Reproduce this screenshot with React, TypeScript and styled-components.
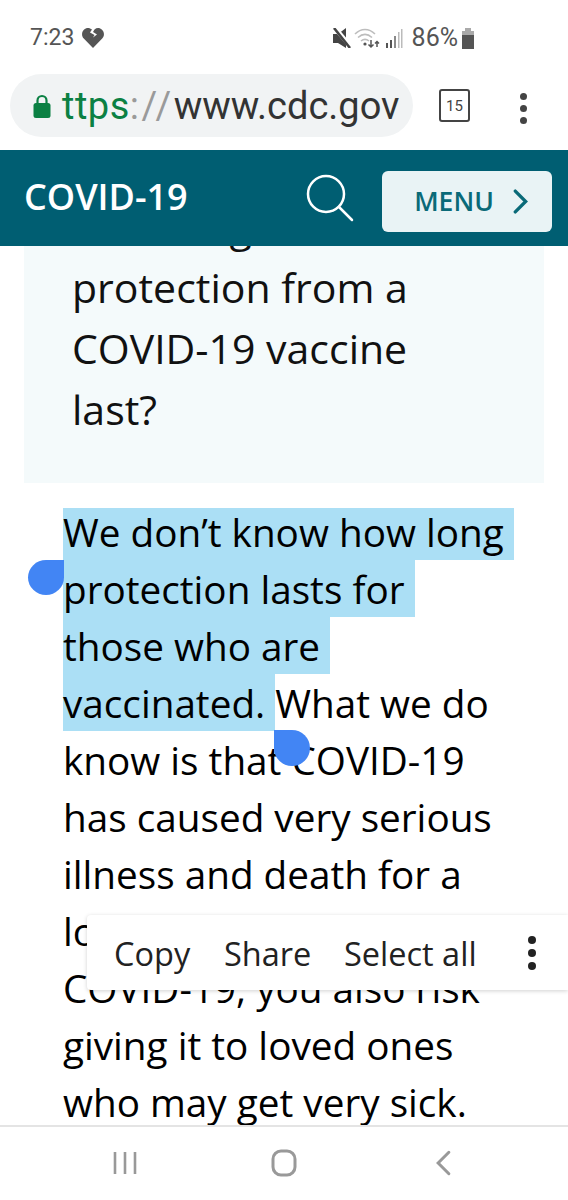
import styled, { createGlobalStyle } from 'styled-components'

const GlobalStyle = createGlobalStyle`
  html, body {
    margin: 0;
    padding: 0;
    background: #fff;
  }
`

const Phone = styled.div`
  width: 568px;
  height: 1200px;
  display: flex;
  flex-direction: column;
  overflow: hidden;
  position: relative;
  background: #fff;
  font-family: 'Open Sans', sans-serif;
`

const StatusBar = styled.div`
  height: 74px;
  flex: none;
  box-sizing: border-box;
  padding: 23px 93px 0 30px;
  display: flex;
  align-items: flex-start;
  justify-content: space-between;
  font-family: Roboto, sans-serif;
  color: #555;
  font-size: 23px;
  line-height: 30px;
`

const StatusGroup = styled.div<{ $gap: number }>`
  display: flex;
  align-items: center;
  gap: ${(p) => p.$gap}px;
`

const BatteryText = styled.span`
  font-size: 25px;
  margin: 0 -3px 0 3px;
`

const UrlRow = styled.div`
  height: 76px;
  flex: none;
  box-sizing: border-box;
  padding: 0 0 13px 10px;
  display: flex;
  align-items: flex-start;
`

const UrlPill = styled.div`
  width: 403px;
  height: 63px;
  border-radius: 32px;
  background: #f1f3f4;
  display: flex;
  align-items: center;
  box-sizing: border-box;
  padding-left: 23px;
  gap: 11px;
  overflow: hidden;
`

const UrlText = styled.div`
  font-family: Roboto, sans-serif;
  font-size: 38px;
  color: #333;
  white-space: nowrap;
  line-height: 63px;
  margin-top: 1px;
`

const Scheme = styled.span`
  color: #0b8043;
  letter-spacing: 0.5px;
`

const Slashes = styled.span`
  color: #9a9a9a;
  letter-spacing: 2.5px;
`

const TabCount = styled.div`
  margin: 15px 0 0 26px;
  width: 27px;
  height: 29px;
  border: 2px solid #444;
  border-radius: 3px;
  display: flex;
  align-items: center;
  justify-content: center;
  font-family: Roboto, sans-serif;
  font-size: 15px;
  color: #444;
`

const Dots = styled.div<{ $size: number; $gap: number; $color: string }>`
  display: flex;
  flex-direction: column;
  gap: ${(p) => p.$gap}px;

  i {
    display: block;
    width: ${(p) => p.$size}px;
    height: ${(p) => p.$size}px;
    border-radius: 50%;
    background: ${(p) => p.$color};
  }
`

const UrlMenu = styled(Dots)`
  margin: 19px 0 0 50px;
`

const SiteHeader = styled.div`
  height: 96px;
  flex: none;
  background: #005e72;
  position: relative;
  z-index: 2;
  display: flex;
  align-items: center;
  box-sizing: border-box;
  padding: 0 16px 0 24px;
`

const SiteTitle = styled.div`
  flex: 1;
  color: #fff;
  font-size: 36px;
  font-weight: 600;
  line-height: 1;
  margin-top: -3px;
`

const SearchIcon = styled.svg`
  margin: 0 28px 0 0;
  display: block;
`

const MenuButton = styled.div`
  width: 170px;
  height: 61px;
  margin-top: 6px;
  border-radius: 6px;
  background: #e9f3f5;
  color: #0a6a78;
  display: flex;
  align-items: center;
  justify-content: center;
  gap: 19px;
  font-size: 26.5px;
  font-weight: 600;
  padding-left: 8px;
  box-sizing: border-box;
`

const Main = styled.div`
  flex: 1;
  min-height: 0;
  overflow: hidden;
  position: relative;
`

const Scrolled = styled.div`
  margin-top: -50px;
`

const Callout = styled.div`
  margin: 0 24px;
  background: #f4fafb;
  padding: 0 48px 43px;
  font-size: 41px;
  line-height: 61px;
  color: #111;
`

const Body = styled.div`
  margin: 20px 0 0 63px;
  font-size: 38.7px;
  line-height: 59px;
  color: #000;
  white-space: nowrap;
`

const Line = styled.div`
  height: 57px;
`

const Selected = styled.span<{ $trim?: boolean }>`
  display: inline-block;
  height: 57px;
  white-space: pre;
  background: ${(p) => (p.$trim ? 'linear-gradient(transparent 5px, #abdff5 5px)' : '#abdff5')};
`

const NavBar = styled.div`
  height: 75px;
  flex: none;
  background: #fff;
  border-top: 2px solid #e4e4e4;
  position: relative;
  z-index: 2;
  display: grid;
  grid-template-columns: repeat(3, 159px);
  justify-content: center;
  justify-items: center;
  align-items: center;
  box-sizing: border-box;
  padding-bottom: 2px;
`

const HandleLeft = styled.div`
  position: absolute;
  left: 28px;
  top: 560px;
  width: 36px;
  height: 35px;
  background: #4285f4;
  border-radius: 50% 0 50% 50%;
`

const HandleRight = styled.div`
  position: absolute;
  left: 274px;
  top: 730px;
  width: 36px;
  height: 36px;
  background: #4285f4;
  border-radius: 0 50% 50% 50%;
`

const SelectionBar = styled.div`
  position: absolute;
  left: 87px;
  top: 915px;
  width: 481px;
  height: 75px;
  background: #fff;
  border-radius: 4px 0 0 4px;
  box-shadow: 0 1px 4px rgba(0, 0, 0, 0.18);
  display: flex;
  align-items: center;
  box-sizing: border-box;
  padding: 0 0 0 27px;
  z-index: 3;
`

const BarAction = styled.div<{ $width: number }>`
  width: ${(p) => p.$width}px;
  font-size: 32.5px;
  color: #222;
  flex: none;
  margin-top: 2px;
`

const BarMenu = styled(Dots)`
  margin-left: -4px;
`

const MuteSvg = styled.svg`
  margin-right: -3px;
`

function Heart() {
  return (
    <svg width="22" height="20" viewBox="0 0 22 20">
      <path d="M11 20 1.800 10.600C-.6 8-.5 4 1.900 1.700 4.400-.6 7.600-.4 10 1.600L8 4.500l4.500 2.500L11 9.500l4-3-4-2.500L12.500 1.400c2.400-1.800 5.200-1.800 7.500.4 2.500 2.400 2.600 6.200.2 8.800z" fill="#555" />
    </svg>
  )
}

function MuteIcon() {
  return (
    <MuteSvg width="18" height="20" viewBox="0 0 18 20">
      <path d="M0 6h5l8-6v20l-8-5H0z" fill="#444" />
      <path d="M2 0l16 19" stroke="#fff" strokeWidth="4.500" />
      <path d="M1 0l16 20" stroke="#444" strokeWidth="2.600" />
    </MuteSvg>
  )
}

function WifiIcon() {
  return (
    <svg width="26" height="22" viewBox="0 0 26 22" fill="none">
      <path d="M1 7c6-6 14-6 20 0M4 10.500c4.500-4 9.500-4 14 0M7 14c3-2.500 5-2.500 8 0" stroke="#bdbdbd" strokeWidth="1.600" />
      <circle cx="11" cy="17" r="1.600" fill="#555" />
      <path d="M17 13v7M14.500 17.500 17 20l2.500-2.500M23 20v-5M21 16.500l2-2 2 2" stroke="#555" strokeWidth="1.500" />
    </svg>
  )
}

function SignalIcon() {
  return (
    <svg width="17" height="20" viewBox="0 0 17 20">
      <rect x="0" y="15" width="2" height="5" fill="#555" />
      <rect x="4" y="12" width="2" height="8" fill="#555" />
      <rect x="8" y="8" width="2" height="12" fill="#8a8a8a" />
      <rect x="12" y="4" width="1.500" height="16" fill="#bbb" />
      <rect x="15" y="1" width="1.500" height="19" fill="#bbb" />
    </svg>
  )
}

function BatteryIcon() {
  return (
    <svg width="14" height="21" viewBox="0 0 14 21">
      <path d="M4 0h6v3H4z" fill="#aaa" />
      <rect x="1" y="3" width="12" height="5" fill="#aaa" />
      <rect x="1" y="7" width="12" height="14" fill="#555" />
    </svg>
  )
}

function LockIcon() {
  return (
    <svg width="18" height="24" viewBox="0 0 18 24" fill="none">
      <path d="M4.500 10V6.500a4.500 4.500 0 0 1 9 0V10" stroke="#0b8043" strokeWidth="2.200" />
      <rect x="0.500" y="9" width="17" height="15" rx="2.500" fill="#0b8043" />
    </svg>
  )
}

function Chevron({ w, h, color, sw, left }: { w: number; h: number; color: string; sw: number; left?: boolean }) {
  return (
    <svg width={w} height={h} viewBox="0 0 14 24" fill="none">
      <path d={left ? 'M12 2L2 12l10 10' : 'M2 2l10 10L2 22'} stroke={color} strokeWidth={sw} strokeLinecap="round" />
    </svg>
  )
}

export default function App() {
  return (
    <Phone>
      <GlobalStyle />
      <StatusBar>
        <StatusGroup $gap={8}>
          <span>7:23</span>
          <Heart />
        </StatusGroup>
        <StatusGroup $gap={6}>
          <MuteIcon />
          <WifiIcon />
          <SignalIcon />
          <BatteryText>86%</BatteryText>
          <BatteryIcon />
        </StatusGroup>
      </StatusBar>

      <UrlRow>
        <UrlPill>
          <LockIcon />
          <UrlText>
            <Scheme>ttps</Scheme>
            <Slashes>://</Slashes>www.cdc.gov
          </UrlText>
        </UrlPill>
        <TabCount>15</TabCount>
        <UrlMenu $size={7} $gap={5} $color="#444">
          <i />
          <i />
          <i />
        </UrlMenu>
      </UrlRow>

      <SiteHeader>
        <SiteTitle>COVID-19</SiteTitle>
        <SearchIcon width="48" height="48" viewBox="0 0 48 48" fill="none">
          <circle cx="20" cy="20" r="18" stroke="#fff" strokeWidth="2.500" />
          <path d="M33 33l13 13" stroke="#fff" strokeWidth="2.500" strokeLinecap="round" />
        </SearchIcon>
        <MenuButton>
          MENU
          <Chevron w={15} h={25} color="#0a6a78" sw={3.2} />
        </MenuButton>
      </SiteHeader>

      <Main>
        <Scrolled>
          <Callout>
            How long does
            <br />
            protection from a
            <br />
            COVID-19 vaccine
            <br />
            last?
          </Callout>
          <Body>
            <Line>
              <Selected $trim>We don’t know how long </Selected>
            </Line>
            <Line>
              <Selected>protection lasts for </Selected>
            </Line>
            <Line>
              <Selected>those who are </Selected>
            </Line>
            <Line>
              <Selected>vaccinated. </Selected>What we do
            </Line>
            <Line>know is that COVID-19</Line>
            <Line>has caused very serious</Line>
            <Line>illness and death for a</Line>
            <Line>lot of people. If you get</Line>
            <Line>COVID-19, you also risk</Line>
            <Line>giving it to loved ones</Line>
            <Line>who may get very sick.</Line>
          </Body>
        </Scrolled>
      </Main>

      <NavBar>
        <svg width="26" height="24" viewBox="0 0 26 24">
          <path d="M3 1v22M13 1v22M23 1v22" stroke="#999" strokeWidth="2.600" />
        </svg>
        <svg width="26" height="28" viewBox="0 0 26 28" fill="none">
          <rect x="2" y="2" width="22" height="24" rx="8" stroke="#999" strokeWidth="3" />
        </svg>
        <Chevron w={15} h={26} color="#999" sw={2.8} left />
      </NavBar>

      <HandleLeft />
      <HandleRight />

      <SelectionBar>
        <BarAction $width={110}>Copy</BarAction>
        <BarAction $width={120}>Share</BarAction>
        <BarAction $width={188}>Select all</BarAction>
        <BarMenu $size={8} $gap={5} $color="#222">
          <i />
          <i />
          <i />
        </BarMenu>
      </SelectionBar>
    </Phone>
  )
}
